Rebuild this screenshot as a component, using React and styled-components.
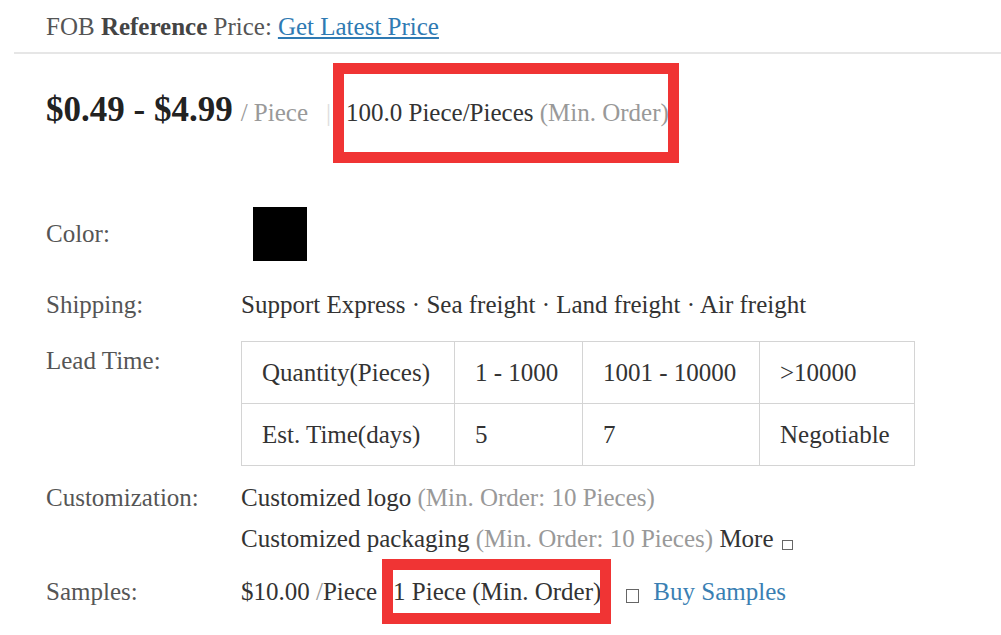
import React from 'react';
import styled, { createGlobalStyle } from 'styled-components';

const GlobalStyle = createGlobalStyle`
  html, body {
    margin: 0;
    padding: 0;
    background: #fff;
  }
  body {
    font-family: "Liberation Serif", "Times New Roman", serif;
    font-size: 25px;
    color: #333;
  }
`;

const Wrapper = styled.div`
  width: 1001px;
  height: 635px;
  overflow: hidden;
  padding-left: 14px;
  box-sizing: border-box;
`;

const Header = styled.div`
  padding: 12px 0 10px 32px;
  line-height: 30px;
  border-bottom: 2px solid #e6e6e6;
  color: #555;
  b {
    font-weight: bold;
    color: #444;
  }
`;

const Link = styled.a`
  color: #2f7ab3;
  text-decoration: underline;
  margin-left: 6px;
  cursor: pointer;
`;

const Body = styled.div`
  padding-left: 32px;
`;

const PriceRow = styled.div`
  margin-top: 36px;
  display: flex;
  align-items: baseline;
  line-height: 40px;
`;

const Price = styled.span`
  font-size: 35px;
  font-weight: bold;
  color: #222;
`;

const Unit = styled.span`
  color: #999;
  margin-left: 8px;
`;

const Sep = styled.span`
  color: #ddd;
  margin: 0 15px 0 18px;
`;

const Muted = styled.span`
  color: #999;
`;

const Marked = styled.span`
  position: relative;
  margin-left: ${(p) => p.$ml || 0}px;
  &::after {
    content: '';
    position: absolute;
    top: ${(p) => p.$v}px;
    bottom: ${(p) => p.$v}px;
    left: ${(p) => p.$l}px;
    right: ${(p) => p.$r}px;
    border: 11px solid #f03434;
    pointer-events: none;
  }
`;

const Row = styled.div`
  display: flex;
  align-items: ${(p) => (p.$top ? 'flex-start' : 'center')};
  margin-top: ${(p) => p.$mt}px;
  line-height: ${(p) => p.$lh || 40}px;
`;

const Label = styled.div`
  width: 195px;
  flex-shrink: 0;
  color: #555;
`;

const Value = styled.div`
  color: #333;
`;

const Swatch = styled.div`
  width: 54px;
  height: 54px;
  background: #000;
  margin-left: 12px;
`;

const Table = styled.table`
  border-collapse: collapse;
  color: #333;
  td {
    border: 1px solid #d4d4d4;
    height: 62px;
    padding: 0 20px;
    box-sizing: border-box;
    line-height: 30px;
    white-space: nowrap;
  }
`;

const Lines = styled.div`
  line-height: 41px;
`;

const TinyBox = styled.span`
  display: inline-block;
  width: ${(p) => p.$w}px;
  height: ${(p) => p.$h}px;
  border: 1px solid #666;
  margin-left: ${(p) => p.$ml || 0}px;
  margin-right: ${(p) => p.$mr || 0}px;
  vertical-align: ${(p) => p.$va}px;
`;

const BlueLink = styled.span`
  color: #3a7fb3;
`;

const leadCols = [213, 128, 177, 155];
const leadRows = [
  ['Quantity(Pieces)', '1 - 1000', '1001 - 10000', '>10000'],
  ['Est. Time(days)', '5', '7', 'Negotiable'],
];

export default function App() {
  return (
    <Wrapper>
      <GlobalStyle />
      <Header>
        FOB <b>Reference</b> Price:<Link>Get Latest Price</Link>
      </Header>
      <Body>
        <PriceRow>
          <Price>$0.49 - $4.99</Price>
          <Unit>/ Piece</Unit>
          <Sep>|</Sep>
          <Marked $l={-13} $r={-10} $v={-30}>
            100.0 Piece/Pieces <Muted>(Min. Order)</Muted>
          </Marked>
        </PriceRow>

        <Row $mt={74}>
          <Label>Color:</Label>
          <Swatch />
        </Row>

        <Row $mt={24}>
          <Label>Shipping:</Label>
          <Value>Support Express · Sea freight · Land freight · Air freight</Value>
        </Row>

        <Row $mt={16} $top>
          <Label>Lead Time:</Label>
          <Table>
            <colgroup>
              {leadCols.map((w, i) => (
                <col key={i} style={{ width: w }} />
              ))}
            </colgroup>
            <tbody>
              {leadRows.map((r, i) => (
                <tr key={i}>
                  {r.map((c, j) => (
                    <td key={j}>{c}</td>
                  ))}
                </tr>
              ))}
            </tbody>
          </Table>
        </Row>

        <Row $mt={11} $top $lh={41}>
          <Label>Customization:</Label>
          <Lines>
            <div>
              Customized logo <Muted>(Min. Order: 10 Pieces)</Muted>
            </div>
            <div>
              Customized packaging <Muted>(Min. Order: 10 Pieces)</Muted> More
              <TinyBox $ml={8} $w={9} $h={8} $va={-3} />
            </div>
          </Lines>
        </Row>

        <Row $mt={12} $lh={41}>
          <Label>Samples:</Label>
          <Value>
            $10.00 <Muted>/</Muted>Piece
            <Marked $ml={16} $l={-11} $r={-10} $v={-19}>1 Piece (Min. Order)</Marked>
            <TinyBox $ml={25} $mr={14} $w={11} $h={12} $va={-3} />
            <BlueLink>Buy Samples</BlueLink>
          </Value>
        </Row>
      </Body>
    </Wrapper>
  );
}
